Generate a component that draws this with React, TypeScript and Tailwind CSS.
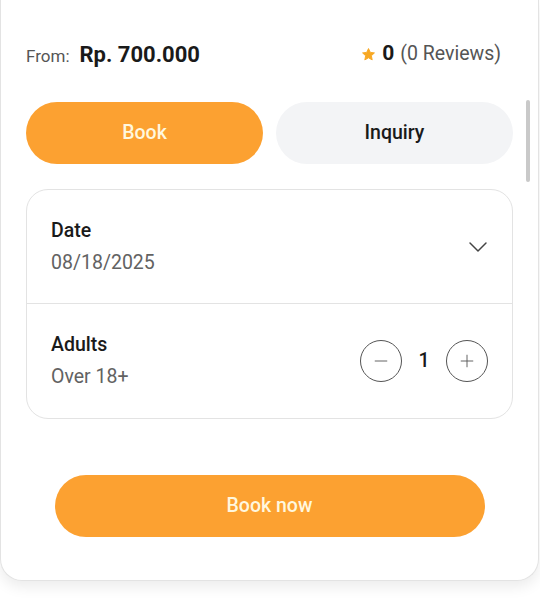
import React, { useState } from 'react';
import { ChevronDown, Minus, Plus } from 'lucide-react';

export default function App() {
  const [tab, setTab] = useState<'book' | 'inquiry'>('book');
  const [adults, setAdults] = useState(1);

  return (
    <div className="min-h-[607px] w-[540px] bg-white" style={{ fontFamily: 'Roboto, "Noto Sans", sans-serif' }}>
      <div className="relative w-[539px] rounded-b-[22px] border-x border-b border-[#e3e3e3] bg-white px-[25px] pt-[40px] pb-[43px] shadow-[0_6px_14px_rgba(0,0,0,0.08)]">
        {/* scrollbar thumb */}
        <div className="absolute right-[8px] top-[100px] h-[82px] w-[4px] rounded-full bg-[#c9c9c9]"></div>

        {/* Price + rating */}
        <div className="flex h-7 items-center justify-between pr-[12px]">
          <div className="flex items-baseline gap-[10px]">
            <span className="text-[17px] text-[#555]">From:</span>
            <span className="text-[22px] font-bold text-[#1a1a1a]">Rp. 700.000</span>
          </div>
          <div className="flex items-center">
            <svg width="15" height="15" viewBox="0 0 24 24" className="mr-[6px]">
              <path
                d="M12 2.5l2.9 6.1 6.6.8-4.9 4.6 1.3 6.6L12 17.3l-5.9 3.3 1.3-6.6-4.9-4.6 6.6-.8z"
                fill="#f7a823"
                stroke="#f7a823"
                strokeLinejoin="round"
                strokeWidth="1.5"
              />
            </svg>
            <span className="text-[21px] font-bold text-[#1a1a1a]">0</span>
            <span className="ml-[6px] text-[19.5px] text-[#555]">(0 Reviews)</span>
          </div>
        </div>

        {/* Tabs */}
        <div className="mt-[34px] grid grid-cols-2 gap-[13px]">
          <button
            onClick={() => setTab('book')}
            className={`h-[62px] rounded-full text-[19.5px] font-medium ${tab === 'book' ? 'bg-[#fca131] text-[#fff7de]' : 'bg-[#f3f4f6] text-[#1a1a1a]'}`}
          >
            Book
          </button>
          <button
            onClick={() => setTab('inquiry')}
            className={`h-[62px] rounded-full text-[19.5px] font-medium ${tab === 'inquiry' ? 'bg-[#fca131] text-[#fff7de]' : 'bg-[#f3f4f6] text-[#1a1a1a]'}`}
          >
            Inquiry
          </button>
        </div>

        {/* Date + adults */}
        <div className="mt-[25px] rounded-[22px] border border-[#e3e3e3]">
          <div className="flex h-[114px] items-center justify-between border-b border-[#e3e3e3] pl-[24px] pr-[18px]">
            <div className="flex flex-col gap-[6px]">
              <span className="text-[19.5px] leading-[26px] font-medium text-[#1a1a1a]">Date</span>
              <span className="text-[19.5px] leading-[26px] text-[#626262]">08/18/2025</span>
            </div>
            <ChevronDown size={32} strokeWidth={1.1} className="text-[#444]" />
          </div>
          <div className="flex h-[114px] items-center justify-between pl-[24px] pr-[24px]">
            <div className="flex flex-col gap-[6px]">
              <span className="text-[19.5px] leading-[26px] font-medium text-[#1a1a1a]">Adults</span>
              <span className="text-[19.5px] leading-[26px] text-[#626262]">Over 18+</span>
            </div>
            <div className="flex items-center gap-[16px]">
              <button
                onClick={() => setAdults(Math.max(1, adults - 1))}
                className="flex h-[42px] w-[42px] items-center justify-center rounded-full border border-[#555] text-[#555]"
              >
                <Minus size={20} strokeWidth={1.1} />
              </button>
              <span className="w-[12px] text-center text-[19.5px] font-medium text-[#1a1a1a]">{adults}</span>
              <button
                onClick={() => setAdults(adults + 1)}
                className="flex h-[42px] w-[42px] items-center justify-center rounded-full border border-[#555] text-[#555]"
              >
                <Plus size={20} strokeWidth={1.1} />
              </button>
            </div>
          </div>
        </div>

        {/* Book now */}
        <button className="mx-auto mt-[56px] flex h-[62px] w-[430px] items-center justify-center rounded-full bg-[#fca131] text-[19.5px] font-medium text-[#fff7de]">
          Book now
        </button>
      </div>
    </div>
  );
}
